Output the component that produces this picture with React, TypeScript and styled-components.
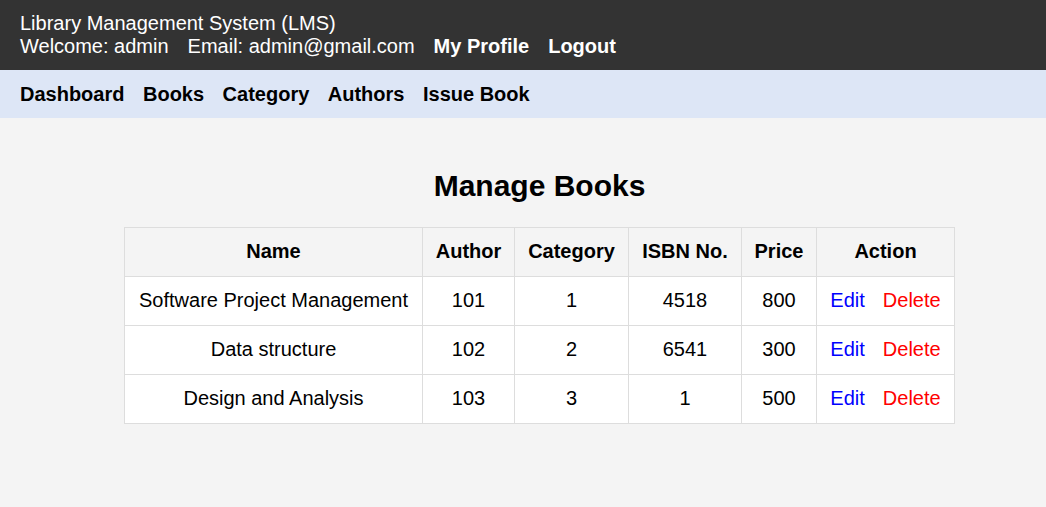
import { FunctionComponent } from 'react';
import styled, { createGlobalStyle } from 'styled-components';

const GlobalStyle = createGlobalStyle`
    html, body {
        margin: 0;
        padding: 0;
        background: #f4f4f4;
        font-family: 'Liberation Sans', Arial, sans-serif;
        font-size: 20px;
        color: #000;
    }
`;

const TopBar = styled.header`
    background: #333333;
    color: #ffffff;
    padding: 12px 20px;
    line-height: 23px;
`;

const InfoRow = styled.div`
    display: flex;
    flex-direction: row;
    align-items: center;
    gap: 19px;
`;

const TopLink = styled.a`
    color: #ffffff;
    font-weight: bold;
    text-decoration: none;
    cursor: pointer;
`;

const NavBar = styled.nav`
    background: #dde6f6;
    padding: 12px 20px;
    line-height: 24px;
    display: flex;
    flex-direction: row;
    gap: 18.5px;
`;

const NavLink = styled.a`
    color: #000;
    font-weight: bold;
    text-decoration: none;
    cursor: pointer;
`;

const Main = styled.main`
    padding: 20px 0 40px 33px;
    display: flex;
    flex-direction: column;
    align-items: center;
`;

const Title = styled.h2`
    font-size: 30px;
    font-weight: bold;
    margin: 31px 0 24px;
    line-height: 34px;
`;

const Table = styled.table`
    border-collapse: collapse;
    table-layout: fixed;
    width: 830px;
    background: #ffffff;
`;

const HeadCell = styled.th`
    background: #f4f4f4;
    border: 1px solid #dddddd;
    padding: 11px 0 13px;
    line-height: 24px;
    font-weight: bold;
    text-align: center;
    white-space: nowrap;
`;

const Cell = styled.td`
    border: 1px solid #dddddd;
    padding: 11px 0 13px;
    line-height: 24px;
    text-align: center;
    white-space: nowrap;
`;

const ActionLink = styled.a<{ $danger?: boolean }>`
    color: ${(p) => (p.$danger ? '#ff0000' : '#0000ff')};
    text-decoration: none;
    cursor: pointer;
    margin-right: ${(p) => (p.$danger ? '0' : '18px')};
`;

const columns = [
    { title: 'Name', width: 298 },
    { title: 'Author', width: 92 },
    { title: 'Category', width: 114 },
    { title: 'ISBN No.', width: 113 },
    { title: 'Price', width: 75 },
    { title: 'Action', width: 138 },
];

const books = [
    { name: 'Software Project Management', author: 101, category: 1, isbn: 4518, price: 800 },
    { name: 'Data structure', author: 102, category: 2, isbn: 6541, price: 300 },
    { name: 'Design and Analysis', author: 103, category: 3, isbn: 1, price: 500 },
];

const App: FunctionComponent = () => {
    return (
        <>
            <GlobalStyle />
            <TopBar>
                <div>Library Management System (LMS)</div>
                <InfoRow>
                    <span>Welcome: admin</span>
                    <span>Email: admin@gmail.com</span>
                    <TopLink>My Profile</TopLink>
                    <TopLink>Logout</TopLink>
                </InfoRow>
            </TopBar>
            <NavBar>
                <NavLink>Dashboard</NavLink>
                <NavLink>Books</NavLink>
                <NavLink>Category</NavLink>
                <NavLink>Authors</NavLink>
                <NavLink>Issue Book</NavLink>
            </NavBar>
            <Main>
                <Title>Manage Books</Title>
                <Table>
                    <colgroup>
                        {columns.map((c) => (
                            <col key={c.title} width={c.width} />
                        ))}
                    </colgroup>
                    <thead>
                        <tr>
                            {columns.map((c) => (
                                <HeadCell key={c.title}>{c.title}</HeadCell>
                            ))}
                        </tr>
                    </thead>
                    <tbody>
                        {books.map((b) => (
                            <tr key={b.isbn}>
                                <Cell>{b.name}</Cell>
                                <Cell>{b.author}</Cell>
                                <Cell>{b.category}</Cell>
                                <Cell>{b.isbn}</Cell>
                                <Cell>{b.price}</Cell>
                                <Cell>
                                    <ActionLink>Edit</ActionLink>
                                    <ActionLink $danger>Delete</ActionLink>
                                </Cell>
                            </tr>
                        ))}
                    </tbody>
                </Table>
            </Main>
        </>
    );
};

export default App;
